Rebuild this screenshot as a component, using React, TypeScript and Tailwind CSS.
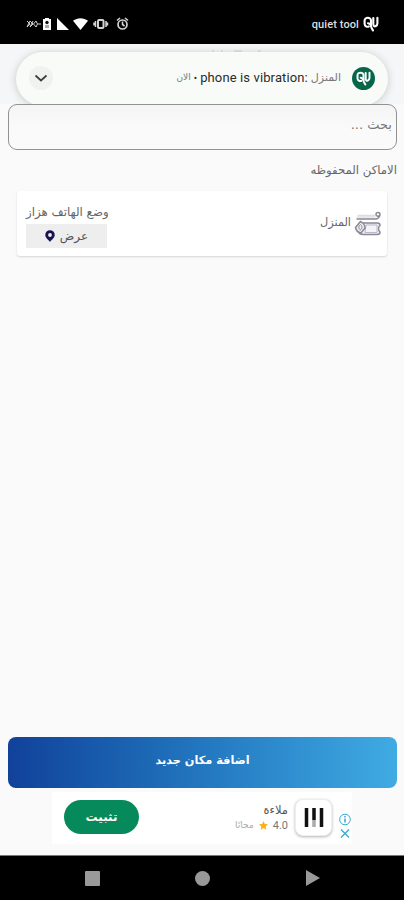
import type { ReactNode } from "react"

const QuLogo = ({ className }: { className?: string }) => (
  <svg
    viewBox="0 0 16 16"
    className={className}
    fill="none"
    stroke="currentColor"
    strokeWidth="2.1"
    strokeLinecap="round"
    strokeLinejoin="round"
    aria-hidden="true"
  >
    <path d="M8 9V4.600C8 .8 1.600.8 1.600 4.600v3.200c0 2.400 2.400 3.400 4.200 2.700" />
    <path d="M5 7.200c2 .3 3 1.800 3.200 3.600.3 1.700 1.200 2.600 1.800 3.600" />
    <path d="M10.300 2v5.800c0 2.300 1.100 3 2.200 2.400 1-.5 1.900-1.400 1.900-2.800V1.800" />
  </svg>
)

const StatusIcons = () => (
  <svg viewBox="0 0 104 16" className="h-4 w-[104px]" fill="none" stroke="#d4d4d4" aria-hidden="true">
    <path d="m1 5 3 3-3 3M4 5l3 3-3 3M4 5 1 11M7 5l-3 6M7.500 8 10 5l1.500 3L10 11zM12 8h3" strokeWidth="1" />
    <path d="M17 3h2V2h4v1h2v11h-8z" fill="#fff" stroke="none" />
    <circle cx="21" cy="6.500" r="1.700" fill="#111" stroke="none" />
    <path d="M19 9h4v3h-4z" fill="#aaa" stroke="none" />
    <path d="M31 2v12h12z" fill="#fff" stroke="none" />
    <path d="M47 4.800c4.600-3.400 10.400-3.400 15 0L54.500 14z" fill="#fff" stroke="none" />
    <rect x="72" y="4" width="5.500" height="8" rx="1" strokeWidth="2" />
    <path d="M69.500 5v6M80 5v6M68 6.500v3M81.500 6.500v3" strokeWidth="1.500" />
    <circle cx="96.500" cy="8.500" r="4.500" strokeWidth="1.700" />
    <path d="M96.500 5.500v3l2 1.500M91 4.500l3-2.500M102 4.500 99 2" strokeWidth="1.600" />
  </svg>
)

const ScrollIcon = () => (
  <svg viewBox="0 0 28 26" className="h-[26px] w-7 shrink-0" fill="none" stroke="#8b8994" strokeWidth="1.500" aria-hidden="true">
    <path d="M3 4h19l-1 3.500H4C2.500 7.500 2 4.500 4 4" fill="#e9e8ed" stroke="none" />
    <path d="M2.500 8h19c2 0 4.500-2 4.500-4.500 0-2.500-4-2.700-4-.2 0 2.300 3 2.500 3.700.7" />
    <path d="M4 4.500h17" stroke="#dddce2" />
    <path d="M8 12h15.500c2.500 0 2.500 1.500 2.500 2.500-2 2-2 4.500 0 6.500 0 1.500-1 2.500-2.500 2.500H9c-2.500 0-4-1.500-4.500-3" fill="#eeedf2" />
    <path d="M12 14h11v7.500H11z" fill="#f3f3f8" stroke="#bbbacb" strokeWidth="1" />
    <path d="M6.500 10.500c2.500 1 4.500 4 4.500 6.500L7 22c-3-.5-5-3-5.500-5.500z" fill="#ececf0" />
    <path d="M6.500 13.500c2 1.500 2 4-.2 5.500-2-1.500-2-4 .2-5.500Z" strokeWidth="1" />
  </svg>
)

const PinIcon = () => (
  <svg viewBox="0 0 10 12" className="h-3 w-2.5" aria-hidden="true">
    <path
      fillRule="evenodd"
      d="M5 .2A4.700 4.700 0 0 0 .3 5c0 3 3 4.500 4.700 7 1.700-2.500 4.700-4 4.700-7A4.700 4.700 0 0 0 5 .2Zm0 2.900a1.900 1.900 0 1 1 0 3.800 1.900 1.900 0 0 1 0-3.800Z"
      fill="#17144f"
    />
  </svg>
)

const Arabic = ({ className, children }: { className?: string; children: ReactNode }) => (
  <span dir="rtl" lang="ar" className={`whitespace-nowrap ${className ?? ""}`}>
    {children}
  </span>
)

const StatusBar = () => (
  <header className="flex h-11 shrink-0 items-center justify-between bg-black pt-1 pr-[25px] pl-[26px] text-white">
    <StatusIcons />
    <div className="flex items-center gap-1">
      <span className="pt-0.5 font-[Roboto] text-[11px] font-medium tracking-[0.1px] text-[#dddddd]">quiet tool</span>
      <QuLogo className="size-4" />
    </div>
  </header>
)

const Notification = () => (
  <section className="relative flex h-15 shrink-0 justify-center overflow-hidden bg-[#f5f6f7] px-4 pt-2">
    <div className="flex h-[54px] w-full items-center justify-between rounded-[27px] bg-[#f9fbf8] px-[13px] pb-0.5 shadow-[0_1px_9px_rgba(0,0,0,0.19)]">
      <button
        type="button"
        aria-label="Expand notification"
        className="flex size-6 items-center justify-center rounded-full bg-[#f0f2ef]"
      >
        <svg viewBox="0 0 14 14" className="size-3.5" fill="none" stroke="#3c3e3c" strokeWidth="1.700" aria-hidden="true">
          <path d="m1.500 4.500 5.500 5 5.500-5" />
        </svg>
      </button>
      <div className="flex items-center gap-[11px]">
        <p className="flex items-center gap-[3px] font-[Roboto] text-[13px] tracking-[0.12px] whitespace-nowrap text-[#292b29]">
          <Arabic className="font-['DejaVu_Sans'] text-[9px] tracking-normal text-[#777]">الان</Arabic>
          <span className="text-[10px]">•</span>
          <span>phone is vibration:</span>
          <Arabic className="font-['DejaVu_Sans'] text-[11px] tracking-normal text-[#777]">المنزل</Arabic>
        </p>
        <span className="flex size-[23px] items-center justify-center rounded-full bg-[#07664a] text-white">
          <QuLogo className="size-[15px]" />
        </span>
      </div>
    </div>
    <svg viewBox="0 0 90 3" className="absolute top-[5px] left-[200px] h-[3px] w-[90px]" aria-hidden="true">
      <path d="M12 2h2M21 2h2M34 2h8M58 2h3" stroke="#c6c6c6" />
    </svg>
  </section>
)

const PlaceCard = () => (
  <article className="mx-[17px] mt-3 flex h-[65px] items-center justify-between rounded-[3px] bg-white pr-[5px] pl-[9px] shadow-[0_1px_2px_rgba(0,0,0,0.15)]">
    <div className="flex flex-col gap-0.5 pt-0.5">
      <Arabic className="text-[11.8px] leading-5 text-[#666]">وضع الهاتف هزاز</Arabic>
      <button
        type="button"
        className="flex h-6 w-[81px] items-center justify-center gap-[5px] bg-[#eeeeee]"
      >
        <PinIcon />
        <Arabic className="text-[12px] text-[#555]">عرض</Arabic>
      </button>
    </div>
    <div className="flex items-center gap-[3px]">
      <Arabic className="text-[11.3px] text-[#666]">المنزل</Arabic>
      <ScrollIcon />
    </div>
  </article>
)

const AdBanner = () => (
  <aside className="mx-auto flex h-[52px] w-[300px] items-center bg-white pl-3">
    <button
      type="button"
      className="mb-0.5 flex h-[34px] w-[75px] items-center justify-center rounded-full bg-[#078a5b] text-white"
    >
      <Arabic className="text-[12px] font-bold">تثبيت</Arabic>
    </button>
    <div className="ml-auto flex flex-col items-end gap-0.5">
      <Arabic className="text-[11.5px] leading-[13px] text-[#555]">ملاءة</Arabic>
      <div className="flex items-center gap-[5px] leading-[13px]">
        <Arabic className="text-[9px] text-[#aaa]">مجانًا</Arabic>
        <svg viewBox="0 0 10 10" className="size-[9px]" aria-hidden="true">
          <path d="m5 0 1.500 3.300 3.500.4-2.600 2.400.7 3.600L5 7.900 1.900 9.700l.7-3.600L0 3.700l3.500-.4z" fill="#ffb010" />
        </svg>
        <span className="font-[Roboto] text-[11px] text-[#777]">4.0</span>
      </div>
    </div>
    <div className="mb-0.5 ml-[7px] flex size-[37px] items-center justify-center rounded-[8px] border border-[#eeeeee] bg-white shadow-[0_1px_3px_rgba(0,0,0,0.3)]">
      <svg viewBox="0 0 20 21" className="h-[21px] w-5" aria-hidden="true">
        <path d="M2.500 1v19M10 1v12M17.500 1v19" stroke="#111" strokeWidth="3.500" />
        <path d="M10 13v7" stroke="#aaa" strokeWidth="3.500" />
      </svg>
    </div>
    <svg viewBox="0 0 14 28" className="mt-[15px] ml-[6px] h-7 w-3.5" fill="none" stroke="#35a8cb" aria-hidden="true">
      <circle cx="7" cy="7.500" r="5.300" />
      <path d="M7 6.500v4M7 4v1.500" strokeWidth="1.500" />
      <path d="m3 17.500 8 8M11 17.500l-8 8" strokeWidth="1.200" />
    </svg>
  </aside>
)

const NavigationBar = () => (
  <nav className="flex h-[45px] shrink-0 items-center justify-between border-t border-[#777] bg-black pr-[84px] pl-[85px]">
    <span className="size-[15px] rounded-[1px] bg-[#999]" />
    <span className="size-[15px] rounded-full bg-[#999]" />
    <svg viewBox="0 0 15 16" className="h-4 w-[15px]" aria-hidden="true">
      <path d="M1 0v16l14-8z" fill="#999" />
    </svg>
  </nav>
)

export default function App() {
  return (
    <div className="flex h-[900px] w-[404px] flex-col overflow-hidden bg-[#fafafa] font-['DejaVu_Sans',sans-serif]">
      <StatusBar />
      <Notification />
      <main className="flex min-h-0 flex-1 flex-col">
        <div className="mr-[7px] ml-2 flex h-[46px] shrink-0 rounded-[9px] border border-[#929292] bg-linear-to-b from-[#f3f4f3] to-[#fafafa] to-50%">
          <input
            dir="rtl"
            aria-label="بحث"
            placeholder="بحث ..."
            className="w-full bg-transparent px-1 pb-1 text-[13px] outline-none placeholder:text-[#777]"
          />
        </div>
        <h2 dir="rtl" className="mt-[11px] pr-[7px] text-[11.7px] leading-[18px] text-[#666]">
          الاماكن المحفوظه
        </h2>
        <PlaceCard />
        <button
          type="button"
          className="mt-auto mr-[7px] mb-1 ml-2 flex h-[51px] shrink-0 items-center justify-center rounded-[8px] bg-linear-to-r from-[#12419a] via-[#2377bf] to-[#40abe3] pb-0.5 text-white"
        >
          <Arabic className="text-[11.3px] font-bold">اضافة مكان جديد</Arabic>
        </button>
        <AdBanner />
        <div className="h-[11px] shrink-0" />
      </main>
      <NavigationBar />
    </div>
  )
}
